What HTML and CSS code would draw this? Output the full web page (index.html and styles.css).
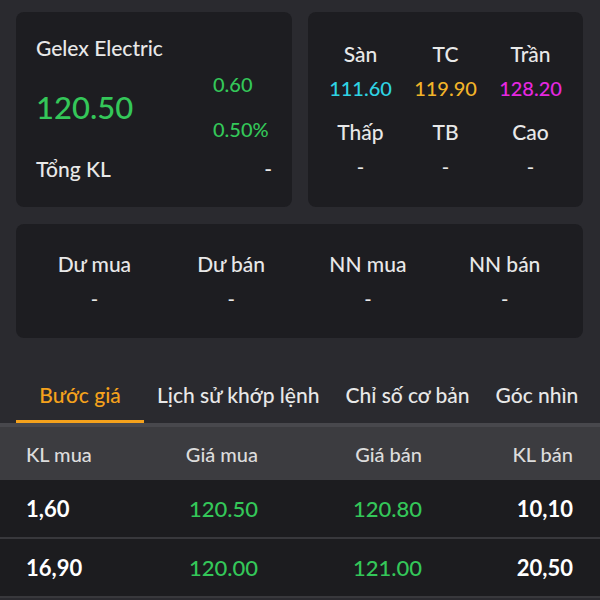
FILE: index.html
```html
<!DOCTYPE html>
<html lang="vi">
<head>
    <meta charset="UTF-8">
    <meta name="viewport" content="width=device-width, initial-scale=1.0">
    <title>Gelex Electric</title>
    <link rel="stylesheet" href="styles.css">
</head>
<body>
    <div class="top">
        <section class="card quote">
            <div class="name">Gelex Electric</div>
            <div class="price-row">
                <div class="price up">120.50</div>
                <div class="change up">
                    <div>0.60</div>
                    <div>0.50%</div>
                </div>
            </div>
            <div class="volume">
                <span>Tổng KL</span>
                <span>-</span>
            </div>
        </section>

        <section class="card stats three">
            <div class="label">Sàn</div>
            <div class="label">TC</div>
            <div class="label">Trần</div>
            <div class="value floor">111.60</div>
            <div class="value ref">119.90</div>
            <div class="value ceil">128.20</div>
            <div class="label">Thấp</div>
            <div class="label">TB</div>
            <div class="label">Cao</div>
            <div class="value">-</div>
            <div class="value">-</div>
            <div class="value">-</div>
        </section>
    </div>

    <section class="card stats four">
        <div class="label">Dư mua</div>
        <div class="label">Dư bán</div>
        <div class="label">NN mua</div>
        <div class="label">NN bán</div>
        <div class="value">-</div>
        <div class="value">-</div>
        <div class="value">-</div>
        <div class="value">-</div>
    </section>

    <nav class="tabs">
        <div class="tab-list">
            <div class="tab active">Bước giá</div>
            <div class="tab">Lịch sử khớp lệnh</div>
            <div class="tab">Chỉ số cơ bản</div>
            <div class="tab">Góc nhìn DN</div>
        </div>
    </nav>

    <div class="book">
        <div class="book-row head">
            <div>KL mua</div>
            <div>Giá mua</div>
            <div>Giá bán</div>
            <div>KL bán</div>
        </div>
        <div class="book-row">
            <div class="vol">1,60</div>
            <div class="up">120.50</div>
            <div class="up">120.80</div>
            <div class="vol">10,10</div>
        </div>
        <div class="book-row">
            <div class="vol">16,90</div>
            <div class="up">120.00</div>
            <div class="up">121.00</div>
            <div class="vol">20,50</div>
        </div>
    </div>
</body>
</html>
```

FILE: styles.css
```css
body {
    margin: 0;
    background-color: #2a2a2f;
    color: #e8e8e8;
    font-family: Lato, "Noto Sans", sans-serif;
    font-size: 21px;
    font-weight: 500;
    width: 600px;
    height: 600px;
    overflow: hidden;
}
.top {
    display: grid;
    grid-template-columns: 276px 275px;
    gap: 16px;
    padding: 12px 17px 0 16px;
}
.card {
    background: #1d1d21;
    border-radius: 8px;
}
.top .card {
    height: 195px;
    box-sizing: border-box;
}
.up {
    color: #34c759;
}

/* quote card */
.quote {
    padding: 22px 20px 0 20px;
}
.name {
    line-height: 28px;
}
.price-row {
    display: grid;
    grid-template-columns: 177px 1fr;
    align-items: center;
}
.price {
    font-size: 31px;
}
.change {
    font-size: 20px;
    line-height: 45px;
}
.volume {
    display: flex;
    justify-content: space-between;
    line-height: 28px;
    margin-top: 3px;
}

/* stat grids */
.stats {
    display: grid;
    padding: 27px 10px 22px 10px;
    text-align: center;
}
.stats.three {
    grid-template-columns: repeat(3, 1fr);
}
.stats.four {
    grid-template-columns: repeat(4, 1fr);
    margin: 17px 17px 0 16px;
    padding: 25px 10px 21px 10px;
}
.stats .label {
    line-height: 30px;
}
.stats .value {
    font-size: 20px;
    line-height: 38px;
}
.stats.three .label:nth-child(n+7) {
    margin-top: 10px;
}
.floor {
    color: #2fd3e3;
}
.ref {
    color: #f2b429;
}
.ceil {
    color: #e628e0;
}

/* tabs */
.tabs {
    margin-top: 32px;
    border-bottom: 4px solid #48484d;
}
.tab-list {
    display: flex;
    margin: 0 16px;
    overflow: hidden;
    white-space: nowrap;
}
.tab {
    flex: none;
    min-width: 128px;
    box-sizing: border-box;
    padding: 11px 13px;
    text-align: center;
    line-height: 28px;
    border-bottom: 3px solid transparent;
}
.tab.active {
    color: #f5a21c;
    border-bottom-color: #f5a21c;
}

/* order book */
.book-row {
    display: grid;
    grid-template-columns: 120px 112px 164px 151px;
    padding: 0 27px 0 26px;
    height: 57px;
    align-items: center;
    background: #1c1c1f;
    border-bottom: 2px solid #38383c;
    font-size: 22px;
}
.book-row div:nth-child(n+2) {
    text-align: right;
}
.book-row.head {
    height: 53px;
    background: #3c3c40;
    border-bottom: none;
    font-size: 20px;
    color: #dcdcdc;
}
.vol {
    color: #ffffff;
    font-weight: bold;
}
```
